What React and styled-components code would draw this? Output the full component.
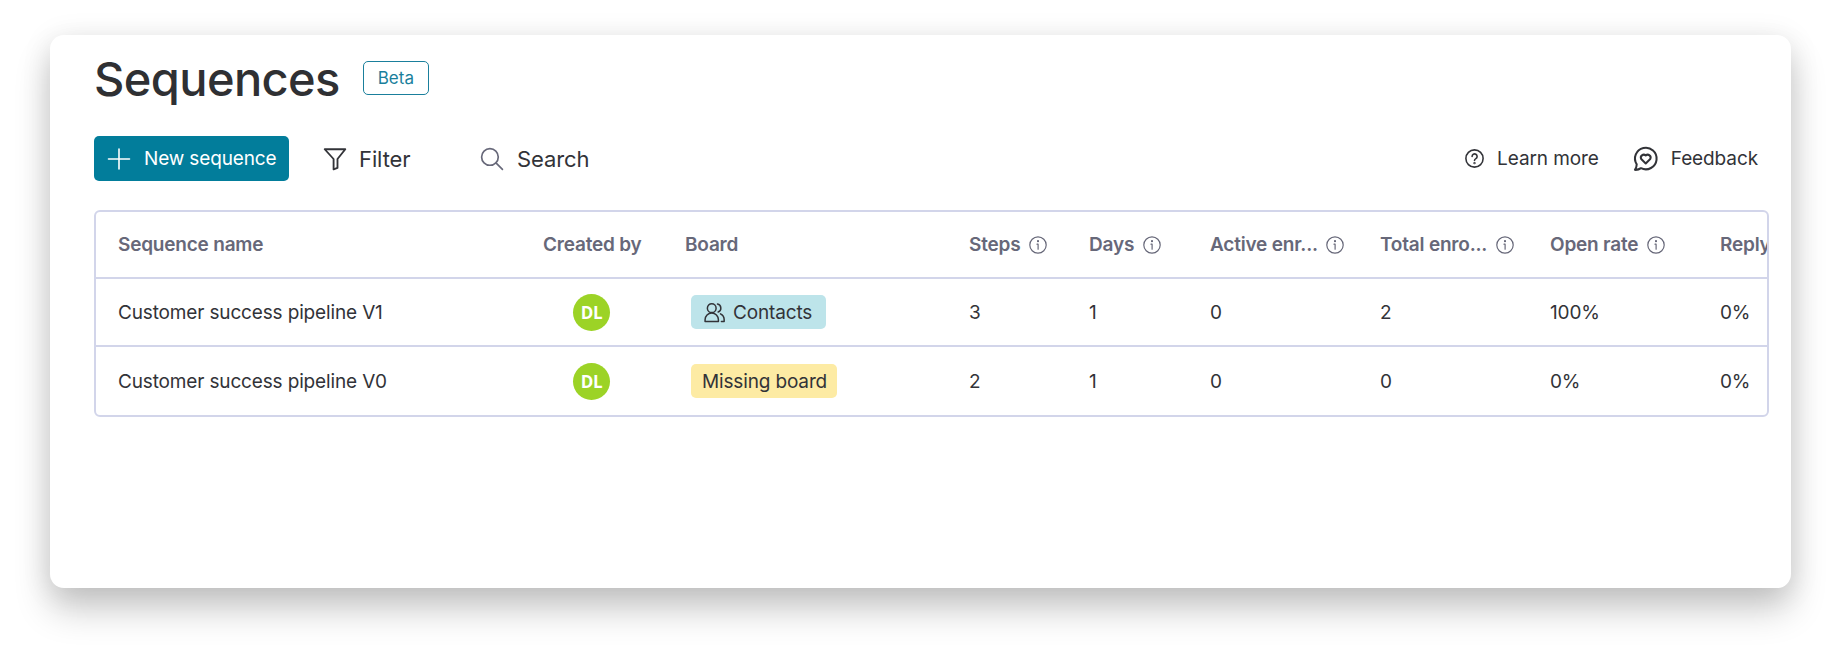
import React from "react";
import styled, { createGlobalStyle } from "styled-components";

const Global = createGlobalStyle`
  html, body { margin: 0; padding: 0; background: #fff; }
  body { width: 1842px; height: 653px; overflow: hidden; font-family: "Inter", "Liberation Sans", sans-serif; }
`;
const Stage = styled.div`
  width: 1842px; height: 653px; box-sizing: border-box; padding: 35px 51px 65px 50px;
`;
const Card = styled.main`
  height: 553px; box-sizing: border-box; background: #fff; border-radius: 14px;
  padding: 11px 22px 0 44px;
  box-shadow: 0 22px 36px rgba(0,0,0,.2), 0 4px 30px rgba(0,0,0,.1);
`;
const TitleRow = styled.div`display: flex; align-items: center; gap: 23px; height: 64px;`;
const Title = styled.h1`
  margin: 0; padding-top: 1px; font-family: "Inter", sans-serif; font-size: 47px; line-height: 64px; font-weight: 500; color: #2f3033; letter-spacing: -.6px;
`;
const Beta = styled.span`
  box-sizing: border-box; width: 66px; height: 34px; border: 1px solid #1a7f9c; border-radius: 5px;
  display: flex; align-items: center; justify-content: center; color: #1a7f9c; font-size: 17px;
`;
const Toolbar = styled.div`display: flex; align-items: center; height: 45px; margin-top: 26px; padding-right: 11px;`;
const PrimaryButton = styled.button`
  box-sizing: border-box; width: 195px; height: 45px; border: 0; border-radius: 5px; background: #027d9b; color: #fff;
  display: flex; align-items: center; gap: 13px; padding: 0 0 0 13px; font: 400 19px "Inter", sans-serif; letter-spacing: -.15px;
`;
const ToolButton = styled.div`
  display: flex; align-items: center; gap: ${p => p.$gap}px; width: ${p => p.$w}px; margin-left: ${p => p.$ml}px;
  font-size: ${p => p.$fs}px; color: #323338; white-space: nowrap; letter-spacing: -.1px;
`;
const Spacer = styled.div`flex: 1;`;
const TableBox = styled.section`
  width: 1675px; box-sizing: border-box; height: 207px; margin-top: 29px; border: 2px solid #d2d5ea; border-radius: 6px; overflow: hidden;
`;
const Row = styled.div`
  display: grid; grid-template-columns: 424px 142px 284px 120px 121px 170px 170px 170px 170px; height: ${p => p.$head ? 67 : 68}px; box-sizing: border-box;
  border-bottom: ${p => p.$last ? 0 : "2px solid #d2d5ea"};
`;
const Cell = styled.div`
  display: flex; align-items: center; padding-left: ${p => p.$first ? 22 : 23}px; font-size: 19px; color: #323338; white-space: nowrap; letter-spacing: -.15px; overflow: hidden;
`;
const HeadCell = styled(Cell)`
  font-weight: 600; color: #676879; letter-spacing: -.2px;
`;
const InfoWrap = styled.span`display: flex; margin-left: ${p => p.$gap}px;`;
const AvatarCell = styled(Cell)`padding-left: 53px;`;
const BoardCell = styled(Cell)`padding-left: 29px;`;
const Avatar = styled.div`
  width: 37px; height: 37px; flex: none; border-radius: 50%; background: #9cd326; color: #fff; font-family: "Open Sans", sans-serif; font-weight: 700; font-size: 17px;
  display: flex; align-items: center; justify-content: center; letter-spacing: -.4px;
`;
const Tag = styled.div`
  height: 34px; box-sizing: border-box; padding: 0 ${p => p.$pad}px 0 ${p => p.$padL}px; border-radius: 5px; background: ${p => p.$bg};
  display: flex; align-items: center; gap: 7px; color: #323338;
`;

const Stroke = ({ size, children, color = "currentColor", w = 1.6, box = 20 }) => (
  <svg width={size} height={size} viewBox={`0 0 ${box} ${box}`} fill="none" stroke={color} strokeWidth={w} strokeLinecap="round" strokeLinejoin="round">{children}</svg>
);
const Info = () => (
  <Stroke size={20} color="#676879" w={1.2}>
    <circle cx="10" cy="10" r="8.2" />
    <path d="M9 9.2h1.1v5" />
    <circle cx="10" cy="6.2" r=".5" fill="#676879" />
  </Stroke>
);
const People = () => (
  <Stroke size={23} w={1.3} color="#323338">
    <circle cx="7.6" cy="6.2" r="3.8" />
    <path d="M1.8 17.8v-1.6a5.8 5.8 0 0 1 11.6 0v1.6z" />
    <path d="M12.6 2.7a3.6 3.6 0 0 1 .6 6.9M15.2 11.2a5.6 5.6 0 0 1 3.2 5v1.6h-2.4" />
  </Stroke>
);

const cols = [["Steps", 8], ["Days", 8], ["Active enr...", 7], ["Total enro...", 8], ["Open rate", 8]];
const data = [
  { name: "Customer success pipeline V1", vals: ["3", "1", "0", "2", "100%", "0%"], tag: <Tag $bg="#bde4ea" $padL={12} $pad={14}><People />Contacts</Tag> },
  { name: "Customer success pipeline V0", vals: ["2", "1", "0", "0", "0%", "0%"], tag: <Tag $bg="#fdeba4" $padL={11} $pad={10}>Missing board</Tag> },
];

export default function App() {
  return (
    <Stage>
      <Global />
      <Card>
        <TitleRow>
          <Title>Sequences</Title>
          <Beta>Beta</Beta>
        </TitleRow>
        <Toolbar>
          <PrimaryButton>
            <Stroke size={24} color="#fff" w={1.6} box={24}><path d="M12 2v20M1.5 12h21" /></Stroke>
            New sequence
          </PrimaryButton>
          <ToolButton $gap={11} $w={157} $ml={33} $fs={22}>
            <Stroke size={26} w={1.7} color="#323338" box={24}><path d="M2.5 3h19l-7.2 9v8.2l-3.6 1.4V12z" /></Stroke>
            Filter
          </ToolButton>
          <ToolButton $gap={13} $w={140} $ml={0} $fs={22}>
            <Stroke size={25} w={1.6} color="#676879" box={24}><circle cx="10.5" cy="10.5" r="8" /><path d="M16.5 16.5l6 6" /></Stroke>
            Search
          </ToolButton>
          <Spacer />
          <ToolButton $gap={12} $ml={0} $fs={19}>
            <Stroke size={21} w={1.5} color="#323338"><circle cx="10" cy="10" r="8.2" /><path d="M7.7 8a2.4 2.4 0 1 1 3.6 2.1c-.9.5-1.3 1-1.3 1.8" /><circle cx="10" cy="14.4" r=".4" /></Stroke>
            Learn more
          </ToolButton>
          <ToolButton $gap={12} $ml={33} $fs={19}>
            <Stroke size={27} w={1.8} color="#323338" box={24}>
              <path d="M4.2 17.2A9.6 9.6 0 1 1 8 20.6c-1.6 1.2-3.2 1.6-5.4 1.5 1-1.4 1.6-3 1.6-4.9z" />
              <path d="M12.2 16.4l-4-3.9a2.6 2.6 0 0 1 4-3.2 2.6 2.6 0 0 1 4 3.2z" />
            </Stroke>
            Feedback
          </ToolButton>
        </Toolbar>
        <TableBox>
          <Row $head>
            <HeadCell $first>Sequence name</HeadCell>
            <HeadCell>Created by</HeadCell>
            <HeadCell>Board</HeadCell>
            {cols.map(([c, g]) => <HeadCell key={c}>{c}<InfoWrap $gap={g}><Info /></InfoWrap></HeadCell>)}
            <HeadCell>Reply rate</HeadCell>
          </Row>
          {data.map((d, i) => (
            <Row key={d.name} $last={i === 1}>
              <Cell $first>{d.name}</Cell>
              <AvatarCell><Avatar>DL</Avatar></AvatarCell>
              <BoardCell>{d.tag}</BoardCell>
              {d.vals.map((v, j) => <Cell key={j}>{v}</Cell>)}
            </Row>
          ))}
        </TableBox>
      </Card>
    </Stage>
  );
}
